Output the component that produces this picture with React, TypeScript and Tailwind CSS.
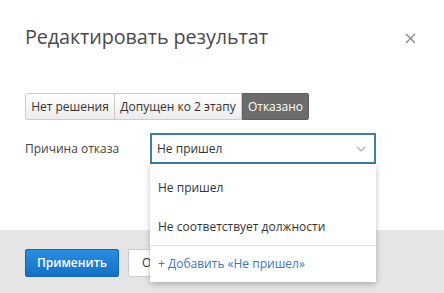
import React from "react";

export default function App() {
  return (
    <div
      className="relative w-[444px] h-[293px] bg-white overflow-hidden text-[#333]"
      style={{ fontFamily: '"Open Sans", "Noto Sans", sans-serif' }}
    >
      <div className="flex flex-col h-full">
        <div className="flex items-center justify-between pl-[25px] pr-[28px] pt-[18px] h-[55px]">
          <div className="text-[19.8px] leading-[28px] text-[#4a4a4a] tracking-[-0.1px]">Редактировать результат</div>
          <svg width="11" height="11" viewBox="0 0 11 11" className="mt-[4px]">
            <path d="M1 1 L10 10 M10 1 L1 10" stroke="#8a8a8a" strokeWidth="1.4" />
          </svg>
        </div>
        <div className="pl-[25px] pt-[38px]">
          <div className="flex h-[27px] text-[12px]">
            <div className="w-[90px] flex items-center justify-center border border-[#ccc] bg-gradient-to-b from-white to-[#ececec] rounded-l-[2px]">Нет решения</div>
            <div className="w-[127px] flex items-center justify-center border border-l-0 border-[#ccc] bg-gradient-to-b from-white to-[#ececec]">Допущен ко 2 этапу</div>
            <div className="w-[67px] flex items-center justify-center bg-[#6b6b6b] text-white border border-[#606060] rounded-r-[2px]">Отказано</div>
          </div>
          <div className="flex items-center mt-[13px]">
            <div className="w-[125px] text-[12px] text-[#444]">Причина отказа</div>
            <div className="w-[226px] h-[31px] border-2 border-[#3f7fa7] flex items-center justify-between pl-[5px] pr-[8px] text-[12px] bg-white">
              <span>Не пришел</span>
              <svg width="10" height="6" viewBox="0 0 10 6">
                <path d="M1 1 L5 5 L9 1" stroke="#aaa" strokeWidth="1.2" fill="none" />
              </svg>
            </div>
          </div>
        </div>
        <div className="flex-1" />
        <div className="h-[63px] bg-[#e5e5e5] flex items-start pl-[25px] pt-[19px] gap-[9px]">
          <div className="w-[94px] h-[28px] rounded-[2px] bg-gradient-to-b from-[#2a8ee0] to-[#1570c4] border border-[#1566b3] text-white text-[12px] font-semibold flex items-center justify-center">Применить</div>
          <div className="w-[90px] h-[28px] rounded-[2px] bg-white border border-[#ccc] text-[12px] flex items-center pl-[13px]">Отмена</div>
        </div>
      </div>
      <div className="absolute left-[150px] top-[164px] w-[226px] h-[118px] bg-white shadow-[0_2px_6px_rgba(0,0,0,0.25)] text-[12px]">
        <div className="h-[45px] flex items-center pl-[8px] pt-[2px]">Не пришел</div>
        <div className="h-[36px] flex items-center pl-[8px]">Не соответствует должности</div>
        <div className="border-t border-[#e3e3e3] h-[37px] flex items-center pl-[8px] text-[#3a78b9]">+ Добавить «Не пришел»</div>
      </div>
    </div>
  );
}
